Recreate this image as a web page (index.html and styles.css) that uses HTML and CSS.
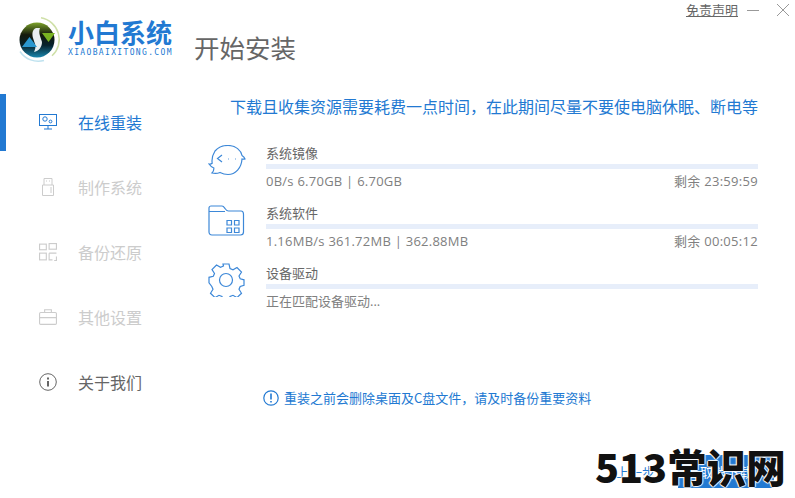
FILE: index.html
```html
<!DOCTYPE html>
<html lang="zh-CN">

<head>
    <meta charset="UTF-8">
    <title>小白系统</title>
    <link rel="stylesheet" href="styles.css">
</head>

<body>
    <div class="window">
        <div class="window-tools">
            <a href="#" class="window-tools__link">免责声明</a>
            <svg class="window-tools__icon" width="12" height="12" viewBox="0 0 12 12"><path d="M0 6.500h12" /></svg>
            <svg class="window-tools__icon" width="12" height="12" viewBox="0 0 12 12"><path d="M0 0l12 12M12 0L0 12" /></svg>
        </div>

        <header class="header">
            <div class="brand">
                <svg class="brand__logo" width="44" height="46" viewBox="0 0 44 46">
                    <defs>
                        <linearGradient id="logo-bg" x1="0" y1="0" x2="0" y2="1">
                            <stop offset="0" stop-color="#7da32a" />
                            <stop offset="0.35" stop-color="#141a0c" />
                            <stop offset="0.65" stop-color="#06222c" />
                            <stop offset="1" stop-color="#1a86ad" />
                        </linearGradient>
                    </defs>
                    <path d="M24 0.800a22 22 0 0 1 11 38" fill="none" stroke="#cfe0a8" stroke-width="1.500" />
                    <path d="M27 43.500a22 22 0 0 1-24-9" fill="none" stroke="#bfe2ef" stroke-width="1.500" />
                    <circle cx="20" cy="23" r="17.500" fill="url(#logo-bg)" />
                    <path d="M19 11c-4 2-4 6-3 10l2 6c1 3 0 6-1 8 5-1 8-5 8-10l-2-6c-1-3-1-6 0-8z" fill="#e8eef0" />
                    <path d="M25 16h13l-6.500 9z" fill="#79b321" />
                    <path d="M5 30l7.500-10 7.500 10z" fill="#2a97cf" />
                </svg>
                <div class="brand__text">
                    <div class="brand__name">小白系统</div>
                    <div class="brand__domain">XIAOBAIXITONG.COM</div>
                </div>
            </div>
            <h1 class="header__title">开始安装</h1>
        </header>

        <div class="body">
            <nav class="nav">
                <div class="nav-item nav-item--active">
                    <svg class="nav-item__icon" viewBox="0 0 18 16"><rect x="0.500" y="0.500" width="17" height="11" /><circle cx="6" cy="5" r="2.200" /><circle cx="11.500" cy="7.500" r="1.400" /><path d="M9 12v3M5 15h8" /></svg>
                    <span>在线重装</span>
                </div>
                <div class="nav-item nav-item--off">
                    <svg class="nav-item__icon" viewBox="0 0 18 18"><path d="M5 7V0.500h8V7M3.500 7h11v10.500h-11zM7 3h1M10 3h1M12 9v6" /></svg>
                    <span>制作系统</span>
                </div>
                <div class="nav-item nav-item--off">
                    <svg class="nav-item__icon" viewBox="0 0 16 16"><rect x="0.500" y="1" width="6" height="5" /><rect x="9" y="0.500" width="6.500" height="5" /><rect x="0.500" y="9" width="6" height="6" /><path d="M9 9h6.500M9 9v6h3M15.500 12v3.500h-2" /></svg>
                    <span>备份还原</span>
                </div>
                <div class="nav-item nav-item--off">
                    <svg class="nav-item__icon" viewBox="0 0 16 14"><rect x="0.500" y="3" width="15" height="10.500" rx="1" /><path d="M5 3V0.500h6V3M0.500 7.500h15" /></svg>
                    <span>其他设置</span>
                </div>
                <div class="nav-item nav-item--about">
                    <svg class="nav-item__icon" viewBox="0 0 18 18"><circle cx="9" cy="9" r="8.300" /><path d="M9 8v5.500" stroke-width="2" /><path d="M9 4.500v2" stroke-width="2" /></svg>
                    <span>关于我们</span>
                </div>
            </nav>

            <main class="content">
                <p class="notice">下载且收集资源需要耗费一点时间，在此期间尽量不要使电脑休眠、断电等</p>

                <div class="task">
                    <svg class="task__icon" width="38" height="32" viewBox="0 0 38 32">
                        <path d="M7 6C10 2.500 15 0.500 20 0.500c8 0 13 5 14 10 1.500 1 2.500 2 3 3.500-1 .3-2 .3-3 0C33.500 23 27.500 29.500 20 29.500c-3 0-5.500-.7-8-2-2 .8-5 1.200-8 .500 1.300-1.200 2-3 1.800-5C3.500 22 2 20.500 1 19c1.200.3 2.300 0 3.200-.7C3.500 14 4.500 10 7 6z" />
                        <path d="M14 10l-4.500 3.500L14 17M20 14h.8M27 14h.8" />
                    </svg>
                    <div class="task__main">
                        <div class="task__name">系统镜像</div>
                        <div class="task__bar"></div>
                        <div class="task__info"><span class="task__stats">0B/s 6.70GB | 6.70GB</span><span class="task__time">剩余 23:59:59</span></div>
                    </div>
                </div>

                <div class="task">
                    <svg class="task__icon" width="38" height="32" viewBox="0 0 38 32">
                        <path d="M3 1h11c1.500 0 2 1 3 2.500S19 6 20.500 6H33c2 0 2.500 1.500 2.500 3.500V27c0 1.500-1 3-3 3H4c-2 0-3-1.500-3-3V3c0-1 1-2 2-2zM17 6.500H1" />
                        <path d="M19 15.500h4.500V20H19zM26.500 15.500H31V20h-4.500zM19 23h4.500v4.500H19zM26.500 23H31v4.500h-4.500z" />
                    </svg>
                    <div class="task__main">
                        <div class="task__name">系统软件</div>
                        <div class="task__bar"></div>
                        <div class="task__info"><span class="task__stats">1.16MB/s 361.72MB | 362.88MB</span><span class="task__time">剩余 00:05:12</span></div>
                    </div>
                </div>

                <div class="task">
                    <svg class="task__icon task__icon--gear" width="38" height="34" viewBox="0 0 38 34">
                        <path d="M15 1h6l1 4.500 3 1.300 4-2.300 4.500 4.500-2.500 4 1.200 2.800 3.800 1v5.500l-3.800 1.200-1.200 2.800 2.500 4-4.500 4.300-4-2.300-3 1.200-1 3.500h-6l-1-3.500-3-1.200-4 2.300-4.500-4.300 2.500-4-1.200-2.800L1 19.800v-5.500l4.300-1 1.200-2.800-2.500-4 4.500-4.500 4 2.300 3-1.300z" />
                        <circle cx="18" cy="17" r="6.500" />
                    </svg>
                    <div class="task__main">
                        <div class="task__name">设备驱动</div>
                        <div class="task__bar"></div>
                        <div class="task__info"><span>正在匹配设备驱动...</span></div>
                    </div>
                </div>

                <div class="warning">
                    <svg class="warning__icon" width="16" height="16" viewBox="0 0 16 16"><circle cx="8" cy="8" r="7.200" /><path d="M8 3.500v6M8 11v1.500" stroke-width="1.600" /></svg>
                    <span>重装之前会删除桌面及C盘文件，请及时备份重要资料</span>
                </div>

                <div class="actions">
                    <a href="#" class="actions__link">上一步</a>
                    <a href="#" class="actions__button">取消下载</a>
                </div>
            </main>
        </div>

        <div class="watermark">513常识网</div>
    </div>
</body>

</html>
```

FILE: styles.css
```css
:root {
    --primary-color: #2279d2;
    --text-color: #666666;
    --disabled-color: #cccccc;
    --bar-color: #e7eefa;
}

* {
    box-sizing: border-box;
}

body {
    margin: 0;
    background-color: #fff;
    color: var(--text-color);
    font-family: "Noto Sans CJK SC", "Open Sans", sans-serif;
}

.window {
    position: relative;
    width: 795px;
    height: 498px;
    overflow: hidden;
}

.window-tools {
    display: flex;
    justify-content: flex-end;
    align-items: center;
    gap: 9px;
    height: 19px;
    padding-right: 6px;
}

.window-tools__link {
    color: var(--text-color);
    font-size: 13px;
    line-height: 19px;
}

.window-tools__icon {
    fill: none;
    stroke: #999;
    stroke-width: 1;
}

.window-tools__icon:last-child {
    margin-left: 9px;
}

.header {
    display: flex;
    height: 72px;
    padding-left: 17px;
}

.brand {
    display: flex;
    gap: 7px;
    width: 177px;
}

.brand__logo {
    flex: none;
    margin-top: -2px;
}

.brand__name {
    margin-bottom: 3px;
    color: var(--primary-color);
    font-size: 26px;
    font-weight: 700;
    line-height: 26px;
    white-space: nowrap;
}

.brand__domain {
    color: var(--primary-color);
    font-family: "DejaVu Sans Mono", monospace;
    font-size: 8px;
    letter-spacing: 1.350px;
    line-height: 10px;
}

.header__title {
    margin: 10px 0 0;
    color: var(--text-color);
    font-size: 25.500px;
    font-weight: 400;
    line-height: 36px;
}

.body {
    display: flex;
}

.nav {
    flex: none;
    width: 208px;
    padding-top: 3px;
}

.nav-item {
    display: flex;
    align-items: center;
    height: 57px;
    margin-bottom: 8px;
    padding-left: 39px;
    padding-bottom: 2px;
    border-left: 6px solid transparent;
    font-size: 16px;
}

.nav-item__icon {
    flex: none;
    width: 18px;
    height: 18px;
    margin-right: 21px;
    margin-left: -6px;
    fill: none;
    stroke: currentColor;
    stroke-width: 1;
}

.nav-item--active {
    border-left-color: var(--primary-color);
    color: var(--primary-color);
}

.nav-item--off {
    color: var(--disabled-color);
}

.nav-item--about {
    color: var(--text-color);
}

.content {
    flex: 1;
    padding-top: 3px;
    padding-right: 37px;
}

.notice {
    margin: 0 0 23px;
    color: var(--primary-color);
    font-size: 16px;
    line-height: 24px;
    text-align: right;
    white-space: nowrap;
}

.task {
    display: flex;
    height: 60px;
    padding-top: 2px;
}

.task__icon {
    flex: none;
    margin-top: 2px;
    margin-right: 20px;
    fill: none;
    stroke: #3d88d8;
    stroke-width: 1.200;
}

.task__icon--gear {
    margin-top: 0;
}

.task__main {
    flex: 1;
    min-width: 0;
}

.task__name {
    padding-bottom: 2px;
    color: var(--text-color);
    font-size: 13px;
    line-height: 19px;
}

.task__bar {
    height: 5px;
    background-color: var(--bar-color);
}

.task__info {
    display: flex;
    justify-content: space-between;
    margin-top: 2px;
    color: #808080;
    font-family: "Open Sans", "Noto Sans CJK SC", sans-serif;
    font-size: 13px;
    line-height: 20px;
}

.task__stats {
    letter-spacing: 0.250px;
}

.task__time {
    letter-spacing: 0.300px;
}

.warning {
    display: flex;
    align-items: center;
    gap: 5px;
    margin: 67px 0 0 55px;
    color: var(--primary-color);
    font-size: 13px;
    line-height: 20px;
}

.warning__icon {
    flex: none;
    fill: none;
    stroke: var(--primary-color);
    stroke-width: 1.200;
}

.actions {
    display: flex;
    justify-content: flex-end;
    align-items: center;
    gap: 23px;
    margin-top: 47px;
}

.actions__link {
    color: var(--primary-color);
    font-size: 13px;
    text-decoration: none;
}

.actions__button {
    width: 96px;
    height: 33px;
    margin-right: -16px;
    background-color: var(--primary-color);
    color: #fff;
    font-size: 13px;
    line-height: 33px;
    text-align: center;
    text-decoration: none;
}

.watermark {
    position: absolute;
    top: 438px;
    left: 595px;
    color: #111;
    font-size: 39.500px;
    font-weight: 900;
    line-height: 56px;
    white-space: nowrap;
    text-shadow: 1px 0 1px #fff, -1px 0 1px #fff, 0 1px 1px #fff, 0 -1px 1px #fff;
}
```
